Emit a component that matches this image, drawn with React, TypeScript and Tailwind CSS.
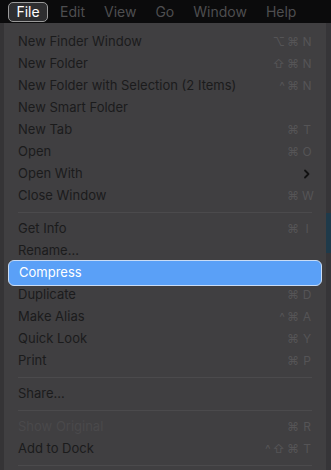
import React from "react";

type Item =
  | { kind: "item"; label: string; keys?: string; letter?: string; submenu?: boolean; disabled?: boolean; active?: boolean }
  | { kind: "sep" };

const items: Item[] = [
  { kind: "item", label: "New Finder Window", keys: "⌥⌘", letter: "N" },
  { kind: "item", label: "New Folder", keys: "⇧⌘", letter: "N" },
  { kind: "item", label: "New Folder with Selection (2 Items)", keys: "^⌘", letter: "N" },
  { kind: "item", label: "New Smart Folder" },
  { kind: "item", label: "New Tab", keys: "⌘", letter: "T" },
  { kind: "item", label: "Open", keys: "⌘", letter: "O" },
  { kind: "item", label: "Open With", submenu: true },
  { kind: "item", label: "Close Window", keys: "⌘", letter: "W" },
  { kind: "sep" },
  { kind: "item", label: "Get Info", keys: "⌘", letter: "I" },
  { kind: "item", label: "Rename..." },
  { kind: "item", label: "Compress", active: true },
  { kind: "item", label: "Duplicate", keys: "⌘", letter: "D" },
  { kind: "item", label: "Make Alias", keys: "^⌘", letter: "A" },
  { kind: "item", label: "Quick Look", keys: "⌘", letter: "Y" },
  { kind: "item", label: "Print", keys: "⌘", letter: "P" },
  { kind: "sep" },
  { kind: "item", label: "Share..." },
  { kind: "sep" },
  { kind: "item", label: "Show Original", keys: "⌘", letter: "R", disabled: true },
  { kind: "item", label: "Add to Dock", keys: "^⇧⌘", letter: "T" },
  { kind: "sep" },
];

const menus = ["Edit", "View", "Go", "Window", "Help"];

const App: React.FC = () => {
  return (
    <div
      className="w-[331px] h-[470px] overflow-hidden bg-[#3a393b] flex flex-col"
      style={{ fontFamily: '"Inter", "Liberation Sans", sans-serif' }}
    >
      {/* menu bar */}
      <div className="h-[23px] bg-[#0b0b0c] flex items-center px-[8px] text-[14px] shrink-0">
        <div className="h-[20px] w-[40px] justify-center flex items-center rounded-[5px] border border-[#9a9a9a] bg-[#2e2e30] text-white">
          File
        </div>
        <div className="flex text-[#4e4e50] ml-[12px] gap-[19px]">
          {menus.map((m) => (
            <span key={m}>{m}</span>
          ))}
        </div>
      </div>

      <div className="flex flex-1">
        <div className="w-[4px] bg-[#353436]" />
        {/* dropdown */}
        <div className="w-[322px] bg-[#403f41] pt-[8px] px-[4px] flex flex-col text-[13px]">
          {items.map((it, i) =>
            it.kind === "sep" ? (
              <div key={i} className="h-[11px] flex items-center px-[10px]">
                <div className="h-px w-full bg-[#4b4a4c]" />
              </div>
            ) : (
              <div
                key={i}
                className={
                  it.active
                    ? "h-[26px] -my-[2px] flex items-center px-[10px] rounded-[6px] bg-[#5aa0f7] border border-[#c9dcf5] text-white"
                    : "h-[22px] flex items-center px-[10px]"
                }
              >
                <span
                  className={
                    it.active ? "flex-1" : it.disabled ? "flex-1 text-[#4a494b]" : "flex-1 text-[#1b1b1c]"
                  }
                >
                  {it.label}
                </span>
                {it.keys && (
                  <span className="flex items-center text-[#555456] text-[12px]">
                    <span className="tracking-[2px]">{it.keys}</span>
                    <span className="w-[10px] text-center ml-[1px]">{it.letter}</span>
                  </span>
                )}
                {it.submenu && (
                  <svg width="8" height="10" viewBox="0 0 8 10" className="mr-[1px]">
                    <path d="M2 1.5 L5.5 5 L2 8.5" fill="none" stroke="#111" strokeWidth="1.8" strokeLinecap="round" strokeLinejoin="round" />
                  </svg>
                )}
              </div>
            )
          )}
        </div>
        <div className="flex-1 bg-[#363538] flex flex-col">
          <div className="h-[190px]" />
          <div className="h-[40px] bg-[#1f3a4a]" />
        </div>
      </div>
    </div>
  );
};

export default App;
